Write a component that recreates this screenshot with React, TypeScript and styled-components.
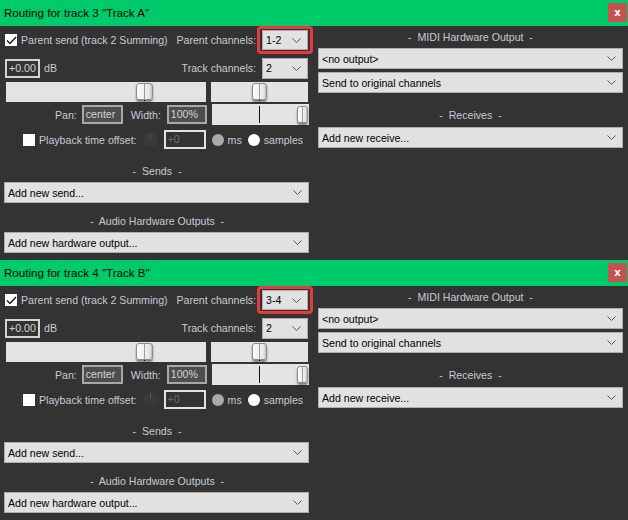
import styled, { createGlobalStyle } from "styled-components";

const GlobalStyle = createGlobalStyle`
  html, body {
    margin: 0;
    padding: 0;
    background: #333333;
    font-family: "Liberation Sans", Arial, sans-serif;
    font-size: 10.6px;
  }
`;

type TrackRouting = {
  num: number;
  name: string;
  parent: string;
  channels: string;
};

const tracks: TrackRouting[] = [
  { num: 3, name: "Track A", parent: "1-2", channels: "2" },
  { num: 4, name: "Track B", parent: "3-4", channels: "2" },
];

const Panel = styled.section`
  height: 260px;
  display: flex;
  flex-direction: column;
  background: #333333;
  overflow: hidden;
`;

const TitleBar = styled.div`
  height: 26px;
  flex: none;
  display: flex;
  align-items: flex-start;
  justify-content: space-between;
  background: #00cb6b;
`;

const TitleText = styled.div`
  padding-left: 4px;
  line-height: 26px;
  font-size: 11.6px;
  color: #000;
`;

const CloseButton = styled.div`
  margin: 3px 1px 0 0;
  width: 19px;
  height: 19px;
  display: flex;
  align-items: center;
  justify-content: center;
  background: #c75050;
  color: #fff;
  font-family: "DejaVu Sans", sans-serif;
  font-weight: bold;
  font-size: 10px;
  line-height: 1;
`;

const Body = styled.div`
  display: grid;
  grid-template-columns: 306px 305px;
  column-gap: 8px;
  padding-left: 4px;
`;

const Column = styled.div`
  display: flex;
  flex-direction: column;
`;

const Row = styled.div<{ $mt?: number; $h: number }>`
  display: flex;
  align-items: center;
  margin-top: ${(p) => p.$mt ?? 0}px;
  height: ${(p) => p.$h}px;
`;

const Label = styled.span<{ $ml?: number; $auto?: boolean }>`
  color: #c6cbd3;
  white-space: nowrap;
  margin-left: ${(p) => (p.$auto ? "auto" : `${p.$ml ?? 0}px`)};
`;

const SectionLabel = styled.div<{ $mt: number }>`
  margin-top: ${(p) => p.$mt}px;
  height: 16px;
  line-height: 16px;
  text-align: center;
  color: #c6cbd3;
  white-space: pre;
`;

const SelectBox = styled.div<{ $w?: number; $h?: number; $mt?: number; $ml?: number; $mr?: number }>`
  box-sizing: border-box;
  width: ${(p) => (p.$w ? `${p.$w}px` : "auto")};
  height: ${(p) => p.$h ?? 21}px;
  margin: ${(p) => p.$mt ?? 0}px ${(p) => p.$mr ?? 0}px 0 ${(p) => p.$ml ?? 0}px;
  flex: none;
  display: flex;
  align-items: center;
  justify-content: space-between;
  padding: 0 6px 0 3px;
  background: #e1e1e1;
  border: 1px solid #adadad;
  color: #000;
  white-space: nowrap;
`;

const Highlight = styled.div`
  margin-left: 1px;
  margin-right: -3px;
  padding: 1px 2px;
  border: 3px solid #e63a3f;
  border-radius: 4px;
`;

const CheckBox = styled.div<{ $ml: number }>`
  box-sizing: border-box;
  flex: none;
  width: 12px;
  height: 12px;
  margin-left: ${(p) => p.$ml}px;
  background: #fff;
  display: flex;
  align-items: center;
  justify-content: center;
`;

const ValueBox = styled.div<{ $w: number; $ml: number; $variant: "gain" | "field" | "off" }>`
  box-sizing: border-box;
  flex: none;
  width: ${(p) => p.$w}px;
  height: 19px;
  margin-left: ${(p) => p.$ml}px;
  padding-left: 2px;
  line-height: 15px;
  border: ${(p) =>
    p.$variant === "gain"
      ? "2px solid #d4d4d4"
      : p.$variant === "field"
        ? "2px solid #a8a8a8"
        : "2px solid #e2e2e2"};
  background: ${(p) => (p.$variant === "field" ? "#4d4d4d" : "#333333")};
  color: ${(p) => (p.$variant === "off" ? "#6c6c6c" : "#d2d4d8")};
`;

const Track = styled.div<{ $w: number; $h: number; $ml?: number }>`
  position: relative;
  flex: none;
  width: ${(p) => p.$w}px;
  height: ${(p) => p.$h}px;
  margin-left: ${(p) => p.$ml ?? 0}px;
  background: #e4e4e4;
`;

const Thumb = styled.div<{ $w: number }>`
  position: absolute;
  top: 1px;
  box-sizing: border-box;
  width: ${(p) => p.$w}px;
  height: 17px;
  border: 1px solid #8c8c8c;
  border-radius: 3px;
  background: linear-gradient(
    to right,
    #fbfbfb 0%,
    #f1f1f1 44%,
    #9a9a9a 47%,
    #9a9a9a 53%,
    #f1f1f1 56%,
    #e2e2e2 85%,
    #bdbdbd 100%
  );
  box-shadow: 0 2px 2px rgba(0, 0, 0, 0.45);
`;

const Tick = styled.div<{ $top: number; $h: number }>`
  position: absolute;
  top: ${(p) => p.$top}px;
  width: 1px;
  height: ${(p) => p.$h}px;
  background: #111;
`;

const Knob = styled.div`
  position: relative;
  flex: none;
  width: 15px;
  height: 15px;
  margin-left: 6px;
  border-radius: 50%;
  background: #393939;
  &::after {
    content: "";
    position: absolute;
    left: 7px;
    top: 1px;
    width: 1px;
    height: 6px;
    background: #555;
  }
`;

const Radio = styled.div<{ $on?: boolean; $ml: number }>`
  flex: none;
  width: 12px;
  height: 12px;
  margin-left: ${(p) => p.$ml}px;
  border-radius: 50%;
  background: ${(p) => (p.$on ? "#ffffff" : "#a9a9a9")};
`;

const Chevron = () => (
  <svg width="9" height="5" viewBox="0 0 9 5">
    <path d="M0.5 0.5 L4.5 4.5 L8.5 0.5" fill="none" stroke="#555" strokeWidth="1" />
  </svg>
);

const Select = ({
  text,
  w,
  h,
  mt,
  ml,
  mr,
}: {
  text: string;
  w?: number;
  h?: number;
  mt?: number;
  ml?: number;
  mr?: number;
}) => (
  <SelectBox $w={w} $h={h} $mt={mt} $ml={ml} $mr={mr}>
    <span>{text}</span>
    <Chevron />
  </SelectBox>
);

const Check = () => (
  <svg width="11" height="9" viewBox="0 0 11 9">
    <path d="M1 4.5 L4 7.5 L10 1" fill="none" stroke="#1a1a1a" strokeWidth="1.4" />
  </svg>
);

const Slider = ({
  w,
  h,
  ml,
  pos,
  thumbW,
  centerLine,
}: {
  w: number;
  h: number;
  ml?: number;
  pos: number;
  thumbW: number;
  centerLine?: boolean;
}) => (
  <Track $w={w} $h={h} $ml={ml}>
    {centerLine && <Tick $top={2} $h={h - 4} style={{ left: w / 2 - 1 }} />}
    {!centerLine && <Tick $top={h - 4} $h={3} style={{ left: pos + Math.floor(thumbW / 2) }} />}
    <Thumb $w={thumbW} style={{ left: pos, top: centerLine ? 2 : 1 }} />
  </Track>
);

const RoutingPanel = ({ track }: { track: TrackRouting }) => (
  <Panel>
    <TitleBar>
      <TitleText>
        Routing for track {track.num} "{track.name}"
      </TitleText>
      <CloseButton>x</CloseButton>
    </TitleBar>
    <Body>
      <Column>
        <Row $h={28}>
          <CheckBox $ml={1}>
            <Check />
          </CheckBox>
          <Label $ml={4}>Parent send (track 2 Summing)</Label>
          <Label $auto>Parent channels:</Label>
          <Highlight>
            <Select text={track.parent} w={46} h={20} />
          </Highlight>
        </Row>
        <Row $mt={3} $h={22}>
          <ValueBox $w={35} $ml={1} $variant="gain">
            +0.00
          </ValueBox>
          <Label $ml={4}>dB</Label>
          <Label $auto>Track channels:</Label>
          <Select text={track.channels} w={46} ml={6} mr={2} />
        </Row>
        <Row $mt={3} $h={20}>
          <Slider w={200} h={20} ml={2} pos={130} thumbW={17} />
          <Slider w={97} h={20} ml={5} pos={41} thumbW={15} />
        </Row>
        <Row $mt={2} $h={21}>
          <Label $ml={51}>Pan:</Label>
          <ValueBox $w={41} $ml={5} $variant="field">
            center
          </ValueBox>
          <Label $ml={8}>Width:</Label>
          <ValueBox $w={40} $ml={6} $variant="field">
            100%
          </ValueBox>
          <Slider w={97} h={21} ml={5} pos={85} thumbW={11} centerLine />
        </Row>
        <Row $mt={4} $h={21}>
          <CheckBox $ml={19} />
          <Label $ml={4}>Playback time offset:</Label>
          <Knob />
          <ValueBox $w={42} $ml={6} $variant="off">
            +0
          </ValueBox>
          <Radio $ml={6} />
          <Label $ml={4}>ms</Label>
          <Radio $on $ml={6} />
          <Label $ml={4}>samples</Label>
        </Row>
        <SectionLabel $mt={13}>{"-  Sends  -"}</SectionLabel>
        <Select text="Add new send..." mt={3} mr={1} />
        <SectionLabel $mt={10}>{"-  Audio Hardware Outputs  -"}</SectionLabel>
        <Select text="Add new hardware output..." mt={3} mr={1} />
      </Column>
      <Column>
        <SectionLabel $mt={3}>{"-  MIDI Hardware Output  -"}</SectionLabel>
        <Select text="<no output>" mt={3} />
        <Select text="Send to original channels" mt={3} />
        <SectionLabel $mt={14}>{"-  Receives  -"}</SectionLabel>
        <Select text="Add new receive..." mt={4} />
      </Column>
    </Body>
  </Panel>
);

export default function App() {
  return (
    <>
      <GlobalStyle />
      {tracks.map((t) => (
        <RoutingPanel key={t.num} track={t} />
      ))}
    </>
  );
}
